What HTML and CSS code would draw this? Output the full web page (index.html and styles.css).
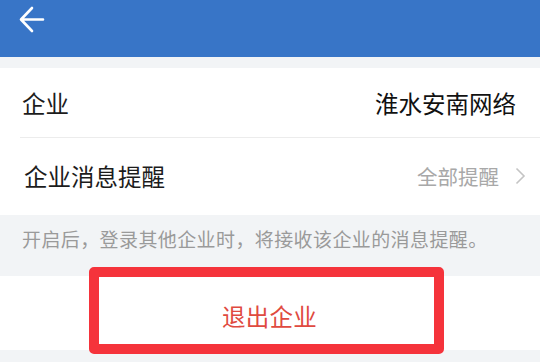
FILE: index.html
```html
<!DOCTYPE html>
<html lang="zh-CN">
<head>
<meta charset="utf-8">
<link rel="stylesheet" href="styles.css">
</head>
<body>
<header class="topbar">
  <svg class="back" width="26" height="28" viewBox="0 0 26 28">
    <path d="M24 13.5 H3 M13 2 L2 13.5 L13 25" fill="none" stroke="#fff" stroke-width="2.6" stroke-linecap="round" stroke-linejoin="round"/>
  </svg>
</header>
<section class="group">
  <div class="row row-first">
    <span class="label">企业</span>
    <span class="value">淮水安南网络</span>
  </div>
  <div class="row row-second">
    <span class="label">企业消息提醒</span>
    <span class="hint">全部提醒
      <svg class="chev" width="11" height="18" viewBox="0 0 11 18"><path d="M1.5 1.5 L9 9 L1.5 16.5" fill="none" stroke="#c4c4c4" stroke-width="1.6"/></svg>
    </span>
  </div>
</section>
<p class="note">开启后，登录其他企业时，将接收该企业的消息提醒。</p>
<section class="exit">
  <span class="exit-text">退出企业</span>
  <div class="mark"></div>
</section>
</body>
</html>
```
FILE: styles.css
```css
* { box-sizing: border-box; }
html, body { margin: 0; padding: 0; }
body {
  width: 540px;
  height: 362px;
  overflow: hidden;
  background: #f2f4f6;
  font-family: "Noto Sans CJK SC", "Noto Sans", sans-serif;
  position: relative;
}
.topbar {
  height: 57px;
  background: #3875c7;
  display: flex;
  align-items: flex-start;
  padding: 6px 0 0 19px;
}
.back { display: block; }
.group {
  margin-top: 11px;
  background: #fff;
}
.row {
  display: flex;
  align-items: center;
  justify-content: space-between;
  margin-left: 20px;
  padding-right: 24px;
}
.row-first {
  height: 70px;
  border-bottom: 1px solid #ececec;
  padding-left: 2px;
}
.row-second {
  height: 77px;
  padding-right: 14px;
  padding-left: 4px;
  padding-bottom: 2px;
}
.label {
  font-size: 23.5px;
  color: #1c1c1c;
}
.value {
  font-size: 23.5px;
  color: #111;
}
.hint {
  display: flex;
  align-items: center;
  gap: 16px;
  font-size: 20.5px;
  color: #a8a8a8;
}
.chev { display: block; }
.note {
  margin: 0;
  height: 61px;
  padding: 10px 0 0 22px;
  font-size: 19px;
  letter-spacing: 0.4px;
  color: #9a9a9a;
}
.exit {
  height: 74px;
  background: #fff;
  display: flex;
  align-items: center;
  justify-content: center;
  padding-top: 6px;
}
.exit-text {
  font-size: 23.5px;
  color: #e04a40;
  letter-spacing: 0.3px;
  margin-left: -1px;
}
.mark {
  position: absolute;
  left: 89px;
  top: 267px;
  width: 355px;
  height: 87px;
  border: 10px solid #f5333b;
  border-radius: 5px;
}
```
